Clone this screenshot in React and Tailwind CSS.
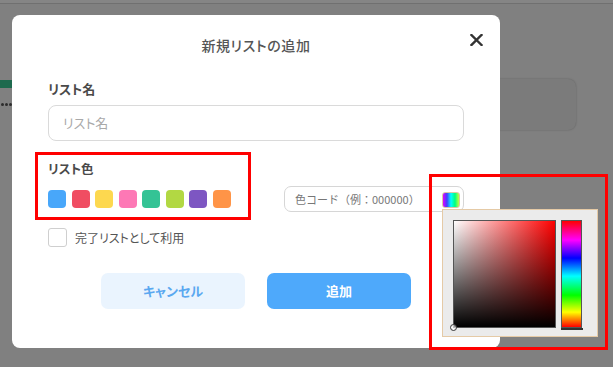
import React from "react";

const swatches = ["#48a7fa", "#f04d62", "#fdd84f", "#fd78b5", "#34c395", "#b2d843", "#7d56c2", "#ff9447"];

export default function App() {
  return (
    <div className="relative w-[613px] h-[367px] overflow-hidden bg-[#808080] font-['Noto_Sans_CJK_JP',sans-serif] [font-feature-settings:'palt']">
      {/* dimmed page behind the modal */}
      <div className="absolute inset-0 flex flex-col">
        <div className="h-[4px] bg-[#858585] border-b border-[#707070]" />
        <div className="relative flex-1">
          <div className="mt-[76px] w-[12px] h-[8px] bg-[#1e6a4e]" />
          <div className="mt-[15px] ml-[1px] flex gap-[1px]">
            <div className="w-[3px] h-[3px] rounded-full bg-[#2c2c2c]" />
            <div className="w-[3px] h-[3px] rounded-full bg-[#2c2c2c]" />
            <div className="w-[3px] h-[3px] rounded-full bg-[#2c2c2c]" />
          </div>
          <div className="absolute left-[470px] top-[75px] w-[106px] h-[51px] rounded-[8px] bg-[#7b7b7b] shadow-[0_0_2px_rgba(0,0,0,0.25)]" />
        </div>
      </div>

      {/* modal */}
      <div className="relative ml-[12px] pt-[15px]">
        <div className="relative w-[488px] h-[333px] rounded-[8px] bg-white px-[36px]">
          <div className="relative h-[60px] flex items-start justify-center pt-[21px]">
            <div className="text-[14px] leading-[18px] text-[#555] font-medium tracking-[0.6px]">新規リストの追加</div>
            <svg className="absolute right-[-19px] top-[19px]" width="13" height="12" viewBox="0 0 13 12">
              <path d="M1.5 1 L11.5 11 M11.5 1 L1.5 11" stroke="#333" strokeWidth="2.4" strokeLinecap="square" />
            </svg>
          </div>

          <div className="mt-[5px] text-[13px] leading-[18px] font-bold text-[#4a4a4a]">リスト名</div>
          <div className="mt-[7px] h-[36px] rounded-[8px] border border-[#dadada] flex items-center pl-[14px] text-[13px] text-[#a9a9a9]">
            リスト名
          </div>

          <div className="mt-[19px] text-[12.5px] leading-[18px] font-bold text-[#4a4a4a]">リスト色</div>
          <div className="mt-[8px] h-[26px] flex items-center justify-between">
            <div className="flex gap-[5.5px]">
              {swatches.map((c) => (
                <div key={c} className="w-[18px] h-[18px] rounded-[4px]" style={{ background: c }} />
              ))}
            </div>
            <div className="relative w-[180px] h-[26px] rounded-[7px] border border-[#d6d6d6] flex items-center pl-[10px] text-[11px] text-[#777] [font-feature-settings:normal]">
              色コード（例：000000）
              <div className="absolute right-[3px] top-[5px] w-[18px] h-[16px] rounded-[3px] border border-[#d9c7a6] bg-[linear-gradient(to_right,#e000ff,#4040ff,#00ffff,#00ff80,#c0ff40)]" />
            </div>
          </div>

          <div className="mt-[16px] flex items-center">
            <div className="w-[19px] h-[19px] rounded-[3px] border border-[#cfcfcf]" />
            <div className="ml-[8px] text-[12px] text-[#555]">完了リストとして利用</div>
          </div>

          <div className="mt-[26px] flex justify-center gap-[22px]">
            <div className="w-[144px] h-[36px] rounded-[7px] bg-[#eaf4fe] flex items-center justify-center text-[13px] font-bold text-[#5aa8f0]">
              キャンセル
            </div>
            <div className="w-[144px] h-[36px] rounded-[7px] bg-[#4ea9fb] flex items-center justify-center text-[13px] font-bold text-white">
              追加
            </div>
          </div>
        </div>

        {/* color picker popover */}
        <div className="absolute left-[430px] top-[209px] w-[156px] h-[128px] bg-[#ebebeb] border border-[#e5caa6] flex gap-[5px] pl-[10px] pt-[10px]">
          <div className="relative w-[103px] h-[108px] border border-[#555] bg-[linear-gradient(to_top,#000,transparent),linear-gradient(to_right,#fff,#f00)]">
            <div className="absolute left-[-4px] bottom-[-4px] w-[7px] h-[7px] rounded-full border border-[#333] bg-white/60" />
          </div>
          <div className="relative w-[21px] h-[108px]">
            <div className="w-full h-full border border-[#555] bg-[linear-gradient(to_bottom,#f00_0%,#f0f_18%,#00f_35%,#0ff_52%,#0f0_70%,#ff0_86%,#f00_100%)]" />
            <div className="absolute left-[0px] bottom-[-2px] w-[22px] h-[2px] bg-[#333]" />
          </div>
        </div>
      </div>

      {/* annotation highlights */}
      <div className="absolute left-[35px] top-[152px] w-[216px] h-[68px] border-[3px] border-[#ff0000]" />
      <div className="absolute left-[429px] top-[174px] w-[179px] h-[176px] border-[3px] border-[#ff0000]" />
    </div>
  );
}
